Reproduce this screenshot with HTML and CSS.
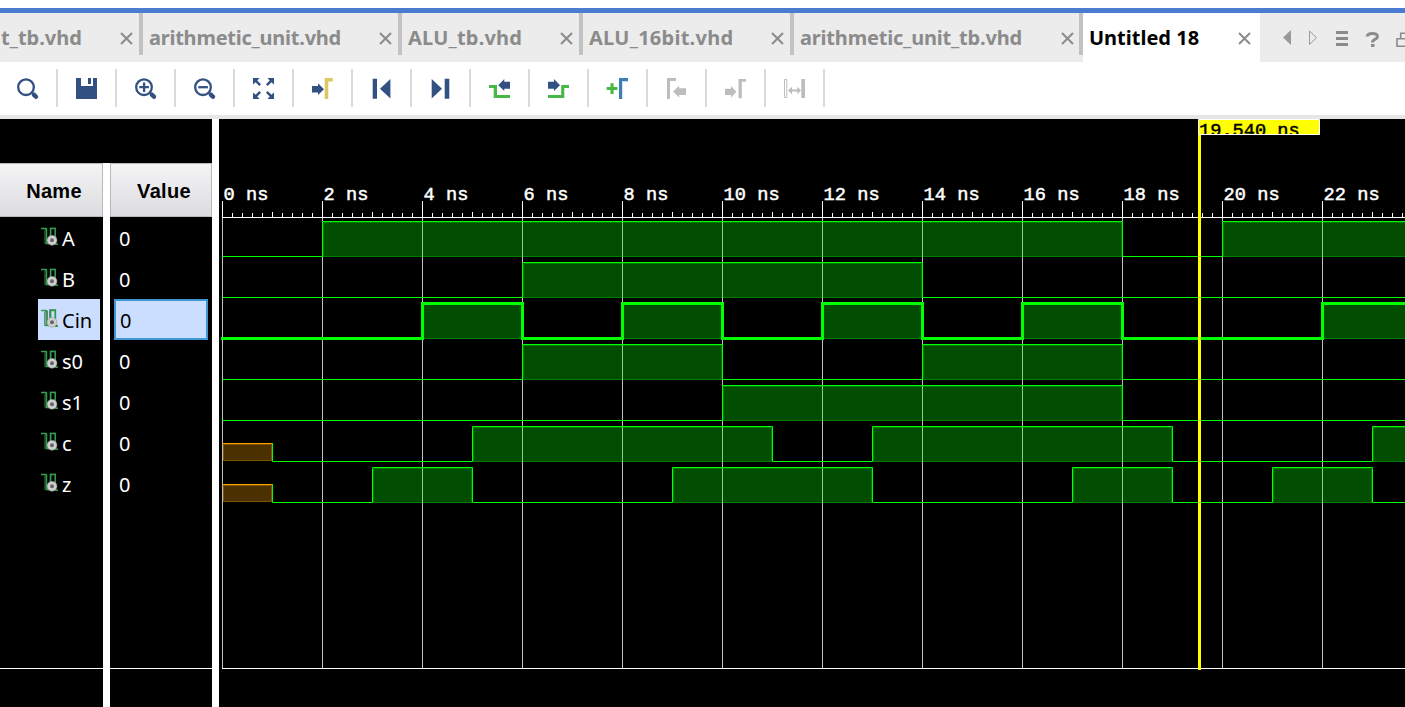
FILE: index.html
```html
<!DOCTYPE html>
<html lang="en">
<head>
<meta charset="utf-8">
<title>Untitled 18</title>
<link rel="stylesheet" href="styles.css">
</head>
<body>
<svg class="defs" width="0" height="0" aria-hidden="true">
  <symbol id="close" viewBox="0 0 13 13"><path d="M1 1 12 12M12 1 1 12" fill="none" stroke="#8b8b8b" stroke-width="2"/></symbol>
  <symbol id="signal" viewBox="0 0 18 20">
    <path d="M4 3H6V17.5H8V18M9 17V2H14.5V17.5H16.5" fill="none" stroke="#123d1c" stroke-width="1.2"/>
    <path d="M0 2.5H5.5M5.2 2V17.5H9M9.7 17V2.5H14.2V18M14 18.2H17" fill="none" stroke="#369e50" stroke-width="1.5"/>
    <path d="M3.7 3.5V17.5H5" fill="none" stroke="#226b34" stroke-width=".8"/>
    <circle cx="11" cy="14.3" r="4.9" fill="#d0cfd0" stroke="#9b9b9b" stroke-width=".6"/>
    <circle cx="11" cy="14.3" r="2" fill="#666"/>
  </symbol>
</svg>
<div class="app">
  <div class="accent"></div>
  <nav class="tabs">
    <div class="tab t1"><span>t_tb.vhd</span><svg class="x"><use href="#close"/></svg></div>
    <div class="tab t2"><span>arithmetic_unit.vhd</span><svg class="x"><use href="#close"/></svg></div>
    <div class="tab t3"><span>ALU_tb.vhd</span><svg class="x"><use href="#close"/></svg></div>
    <div class="tab t4"><span>ALU_16bit.vhd</span><svg class="x"><use href="#close"/></svg></div>
    <div class="tab t5"><span>arithmetic_unit_tb.vhd</span><svg class="x"><use href="#close"/></svg></div>
    <div class="tab t6 active"><span>Untitled 18</span><svg class="x"><use href="#close"/></svg></div>
    <div class="controls">
      <svg width="145" height="49" viewBox="1260 13 145 49">
        <path d="M1291 30V45L1283 37.5Z" fill="#999"/>
        <path d="M1309.5 31V44.5L1316.5 37.7Z" fill="none" stroke="#999"/>
        <path d="M1336 31h12v3h-12zM1336 37h12v3h-12zM1336 43h12v3h-12z" fill="#8b8b8b"/>
        <path d="M1367.3 36.5C1367.3 32.8 1377.5 32.3 1377.5 36.5C1377.5 39.5 1372.5 39 1372.5 42.5" fill="none" stroke="#8b8b8b" stroke-width="3"/>
        <path d="M1371 44h3.5v3h-3.5z" fill="#8b8b8b"/>
        <path d="M1410 46.2H1397V38.7H1410M1400.7 38V33.2H1410" fill="none" stroke="#8b8b8b" stroke-width="1.6"/>
      </svg>
    </div>
  </nav>
  <div class="toolbar">
    <div class="tool"><svg viewBox="0 0 25 25"><g class="lens"><circle cx="11" cy="11.2" r="7.8"/><path class="handle" d="M18.8 18.6 21 20.8"/></g></svg></div>
    <div class="tool"><svg viewBox="0 0 25 25"><path class="navy" d="M2 2H7V10H19V2H23V23H2ZM14 2H17V8H14Z"/></svg></div>
    <div class="tool"><svg viewBox="0 0 25 25"><g class="lens"><circle cx="11" cy="11.2" r="7.8"/><path class="handle" d="M18.8 18.6 21 20.8"/><path d="M6.3 11.2h9.6M11.1 6.4V16"/></g></svg></div>
    <div class="tool"><svg viewBox="0 0 25 25"><g class="lens"><circle cx="11" cy="11.2" r="7.8"/><path class="handle" d="M18.8 18.6 21 20.8"/><path d="M6.3 11.2h9.6"/></g></svg></div>
    <div class="tool"><svg viewBox="0 0 25 25"><path class="navy" d="M2 2H8.5L6.3 4.6 10 8.3 8.3 10 4.6 6.3 2 8.5ZM23 2V8.5L20.4 6.3 16.7 10 15 8.3 18.7 4.6 16.5 2ZM2 23V16.5L4.6 18.7 8.3 15 10 16.7 6.3 20.4 8.5 23ZM23 23H16.5L18.7 20.4 15 16.7 16.7 15 20.4 18.7 23 16.5Z"/></svg></div>
    <div class="tool"><svg viewBox="0 0 25 25"><path class="navy" d="M2 10H8V7.3L14 13.2 8 19V16.6H2Z"/><path class="gold" d="M14.7 2H22.8V5.6H18.3V23H14.7Z"/></svg></div>
    <div class="tool"><svg viewBox="0 0 25 25"><path class="navy" d="M3.7 2.7H8V22.7H3.7ZM21.4 3V22.4L11 12.7Z"/></svg></div>
    <div class="tool"><svg viewBox="0 0 25 25"><path class="navy" d="M3.7 3V22.4L14 12.7ZM16.7 2.7H21.3V22.7H16.7Z"/></svg></div>
    <div class="tool"><svg viewBox="0 0 25 25"><path class="green" d="M2 9H10V19H23V22H6.7V12H2Z"/><path class="navy" d="M11.3 9.2 17.3 3V5.7H23V12.7H17.3V15Z"/></svg></div>
    <div class="tool"><svg viewBox="0 0 25 25"><path class="green" d="M2 19H15.2V9H23V12H18.3V22H2Z"/><path class="navy" d="M14 9.2 8 3V5.7H2V12.7H8V15Z"/></svg></div>
    <div class="tool"><svg viewBox="0 0 25 25"><path class="green" d="M1.7 11H5.5V7.2H8.6V11H12.4V14H8.6V18H5.5V14H1.7Z"/><path class="blue" d="M14 2H23V5.2H17.2V23H14Z"/></svg></div>
    <div class="tool"><svg viewBox="0 0 25 25"><path class="gray" d="M3 2H12V5H6V23H3ZM9 15.5 15.2 9.7V12.2H22V19H15.2V21.4Z"/></svg></div>
    <div class="tool"><svg viewBox="0 0 25 25"><path class="gray" d="M2 12.7H8V10L13.5 15.7 8 21.4V19H2ZM15.5 3H23V5.7H18.8V22.3H15.5Z"/></svg></div>
    <div class="tool"><svg viewBox="0 0 25 25"><path class="gray" d="M19.3 3H23V22H19.3ZM6 14.5 10 10.8V13.6H15.3V10.8L19 14.5 15.3 18.2V15.4H10V18.2Z"/><path d="M2.5 3.5h2.3v18H2.5z" fill="none" stroke="#bdbdbd"/></svg></div>
  </div>
  <main class="viewer">
    <section class="table">
      <div class="col names">
        <div class="head">Name</div>
        <div class="row"><span class="cell"><svg><use href="#signal"/></svg>A</span></div>
        <div class="row"><span class="cell"><svg><use href="#signal"/></svg>B</span></div>
        <div class="row"><span class="cell selected"><svg><use href="#signal"/></svg>Cin</span></div>
        <div class="row"><span class="cell"><svg><use href="#signal"/></svg>s0</span></div>
        <div class="row"><span class="cell"><svg><use href="#signal"/></svg>s1</span></div>
        <div class="row"><span class="cell"><svg><use href="#signal"/></svg>c</span></div>
        <div class="row"><span class="cell"><svg><use href="#signal"/></svg>z</span></div>
        <div class="rest"></div>
      </div>
      <div class="col values">
        <div class="head">Value</div>
        <div class="row"><span class="cell">0</span></div>
        <div class="row"><span class="cell">0</span></div>
        <div class="row"><span class="cell selected">0</span></div>
        <div class="row"><span class="cell">0</span></div>
        <div class="row"><span class="cell">0</span></div>
        <div class="row"><span class="cell">0</span></div>
        <div class="row"><span class="cell">0</span></div>
        <div class="rest"></div>
      </div>
    </section>
    <svg class="waves" width="1186" height="588" viewBox="219 119 1186 588">
      <defs>
        <pattern id="ticks" x="222" y="201" width="100" height="16" patternUnits="userSpaceOnUse">
          <path d="M.5 0V16M10.5 12V16M20.5 12V16M30.5 12V16M40.5 12V16M50.5 11V16M60.5 12V16M70.5 12V16M80.5 12V16M90.5 12V16" stroke="#fff"/>
        </pattern>
        <clipPath id="flag"><path d="M1199 120h121v14h-121z"/></clipPath>
      </defs>
      <g class="time">
        <text x="223.6" y="200">0 ns</text><text x="323.6" y="200">2 ns</text><text x="423.6" y="200">4 ns</text><text x="523.6" y="200">6 ns</text><text x="623.6" y="200">8 ns</text><text x="723.6" y="200">10 ns</text><text x="823.6" y="200">12 ns</text><text x="923.6" y="200">14 ns</text><text x="1023.6" y="200">16 ns</text><text x="1123.6" y="200">18 ns</text><text x="1223.6" y="200">20 ns</text><text x="1323.6" y="200">22 ns</text>
      </g>
      <rect x="222" y="201" width="1183" height="16" fill="url(#ticks)"/>
      <path class="grid" d="M222.5 218V668M322.5 218V668M422.5 218V668M522.5 218V668M622.5 218V668M722.5 218V668M822.5 218V668M922.5 218V668M1022.5 218V668M1122.5 218V668M1222.5 218V668M1322.5 218V668"/>
      <path d="M222 217.5H1405M222 668.5H1405" stroke="#fff"/>
      <g class="fill">
        <path d="M323.5 222.5H1121.5V256.5H323.5ZM1223.5 222.5H1410V256.5H1223.5Z"/>
        <path d="M523.5 263.5H921.5V297.5H523.5Z"/>
        <path d="M423.5 304.5H521.5V338.5H423.5ZM623.5 304.5H721.5V338.5H623.5ZM823.5 304.5H921.5V338.5H823.5ZM1023.5 304.5H1121.5V338.5H1023.5ZM1323.5 304.5H1410V338.5H1323.5Z"/>
        <path d="M523.5 345.5H721.5V379.5H523.5ZM923.5 345.5H1121.5V379.5H923.5Z"/>
        <path d="M723.5 386.5H1121.5V420.5H723.5Z"/>
        <path d="M473.5 427.5H771.5V461.5H473.5ZM873.5 427.5H1171.5V461.5H873.5ZM1373.5 427.5H1410V461.5H1373.5Z"/>
        <path d="M373.5 468.5H471.5V502.5H373.5ZM673.5 468.5H871.5V502.5H673.5ZM1073.5 468.5H1171.5V502.5H1073.5ZM1273.5 468.5H1371.5V502.5H1273.5Z"/>
      </g>
      <path class="unknown" d="M223.5 444.5H271.5V460.5H223.5ZM223.5 485.5H271.5V501.5H223.5Z"/>
      <path d="M222 443.5H273M222 484.5H273" stroke="#ffa500"/>
      <g class="trace">
        <path d="M222.5 256.5H322.5V221.5H1122.5V256.5H1222.5V221.5H1410"/>
        <path d="M222.5 297.5H522.5V262.5H922.5V297.5H1410"/>
        <path class="bold" d="M222.5 338.5H422.5V303.5H522.5V338.5H622.5V303.5H722.5V338.5H822.5V303.5H922.5V338.5H1022.5V303.5H1122.5V338.5H1322.5V303.5H1410"/>
        <path d="M222.5 379.5H522.5V344.5H722.5V379.5H922.5V344.5H1122.5V379.5H1410"/>
        <path d="M222.5 420.5H722.5V385.5H1122.5V420.5H1410"/>
        <path d="M272.5 443.5V461.5H472.5V426.5H772.5V461.5H872.5V426.5H1172.5V461.5H1372.5V426.5H1410"/>
        <path d="M272.5 484.5V502.5H372.5V467.5H472.5V502.5H672.5V467.5H872.5V502.5H1072.5V467.5H1172.5V502.5H1272.5V467.5H1372.5V502.5H1410"/>
      </g>
      <path d="M1198.5 119.5h121v15h-121z" fill="#ff0" stroke="#fff"/>
      <path d="M1198 135h3V670h-3z" fill="#ff0"/>
      <g clip-path="url(#flag)"><text class="stamp" x="1199" y="136">19.540 ns</text></g>
    </svg>
  </main>
</div>
</body>
</html>
```

FILE: styles.css
```css
* { box-sizing: border-box; }
body {
  margin: 0;
  background: #fff;
  font-family: "Open Sans", "Noto Sans", sans-serif;
  overflow: hidden;
}
.defs { display: block; }
.app { width: 1405px; height: 707px; padding-top: 8px; overflow: hidden; }
.accent { height: 5px; background: #4a7dd1; }

.tabs { display: flex; height: 49px; background: #ececec; }
.tab {
  display: flex;
  align-items: center;
  justify-content: space-between;
  height: 42px;
  padding: 0 6px;
  border-right: 4px solid #c2c2c2;
  color: #8b8b8b;
  font: bold 20px/42px "Noto Sans", sans-serif;
  white-space: nowrap;
}
.tab span { padding-top: 8px; }
.x { width: 13px; height: 13px; flex: none; margin-top: 8px; }
.t1 { width: 143px; padding-left: 1px; }
.t2 { width: 259px; letter-spacing: -.24px; }
.t3 { width: 181px; letter-spacing: .2px; }
.t4 { width: 211px; letter-spacing: .25px; }
.t5 { width: 289px; padding-right: 5px; letter-spacing: -.19px; }
.t6 { width: 177px; padding: 0 9px 7px 6px; }
.tab.active { height: 49px; background: #fff; color: #000; border: 0; }
.controls { width: 145px; height: 49px; }

.toolbar {
  display: flex;
  height: 57px;
  margin-left: -1px;
  padding-top: 7px;
  border-bottom: 4px solid #e6e6e6;
}
.tool {
  display: flex;
  align-items: center;
  justify-content: center;
  width: 59px;
  height: 38px;
  border-right: 2px solid #dadada;
}
.tool svg { width: 25px; height: 25px; }
.navy { fill: #335082; }
.gold { fill: #dfc661; }
.green { fill: #48b744; }
.blue { fill: #3a7fb5; }
.gray { fill: #bdbdbd; }
.lens { fill: none; stroke: #335082; stroke-width: 2.3; }
.handle { stroke-width: 4.4; stroke-linecap: round; }

.viewer { display: flex; height: 588px; background: #fff; gap: 7px; }
.table {
  display: flex;
  width: 212px;
  height: 588px;
  padding-top: 44px;
  gap: 7px;
  background: linear-gradient(#000 44px, #fff 44px);
}
.col { display: flex; flex-direction: column; background: #000; color: #fff; }
.names { width: 103px; }
.values { width: 102px; }
.head {
  height: 54px;
  border: 1px solid #b9b9bb;
  background: linear-gradient(#f4f4f5, #dcdce0);
  color: #000;
  font: bold 20px/54px "Liberation Sans", sans-serif;
  letter-spacing: .3px;
  text-align: center;
}
.names .head { border-left: 0; padding-left: 6px; }
.values .head { padding-left: 6px; }
.row { height: 41px; }
.cell {
  display: flex;
  align-items: center;
  height: 41px;
  padding-top: 2px;
  font: 20px/41px "Noto Sans", sans-serif;
}
.names .cell { width: 62px; margin-left: 38px; padding-left: 3px; gap: 3px; }
.names .cell svg { width: 18px; height: 20px; margin-bottom: 5px; }
.values .cell { width: 94px; margin-left: 4px; padding-left: 5px; }
.cell.selected { background: #cbdeff; color: #000; }
.values .cell.selected { border: 2px solid #3e97d3; padding-left: 4px; }
.rest { height: 165px; border-bottom: 1px solid #fff; }

.waves { display: block; width: 1186px; height: 588px; background: #000; }
.time, .stamp {
  font: 18.67px "Liberation Mono", monospace;
  fill: #fff;
  stroke: #fff;
  stroke-width: .5px;
}
.stamp { fill: #000; stroke: #000; }
.grid { stroke: #c0c0c0; }
.fill { fill: rgba(0, 255, 0, .3); stroke: rgba(0, 255, 0, .4); }
.unknown { fill: #4c3100; stroke: #805200; }
.trace { fill: none; stroke: #0f0; stroke-linecap: square; }
.trace .bold { stroke-width: 3; }
```
